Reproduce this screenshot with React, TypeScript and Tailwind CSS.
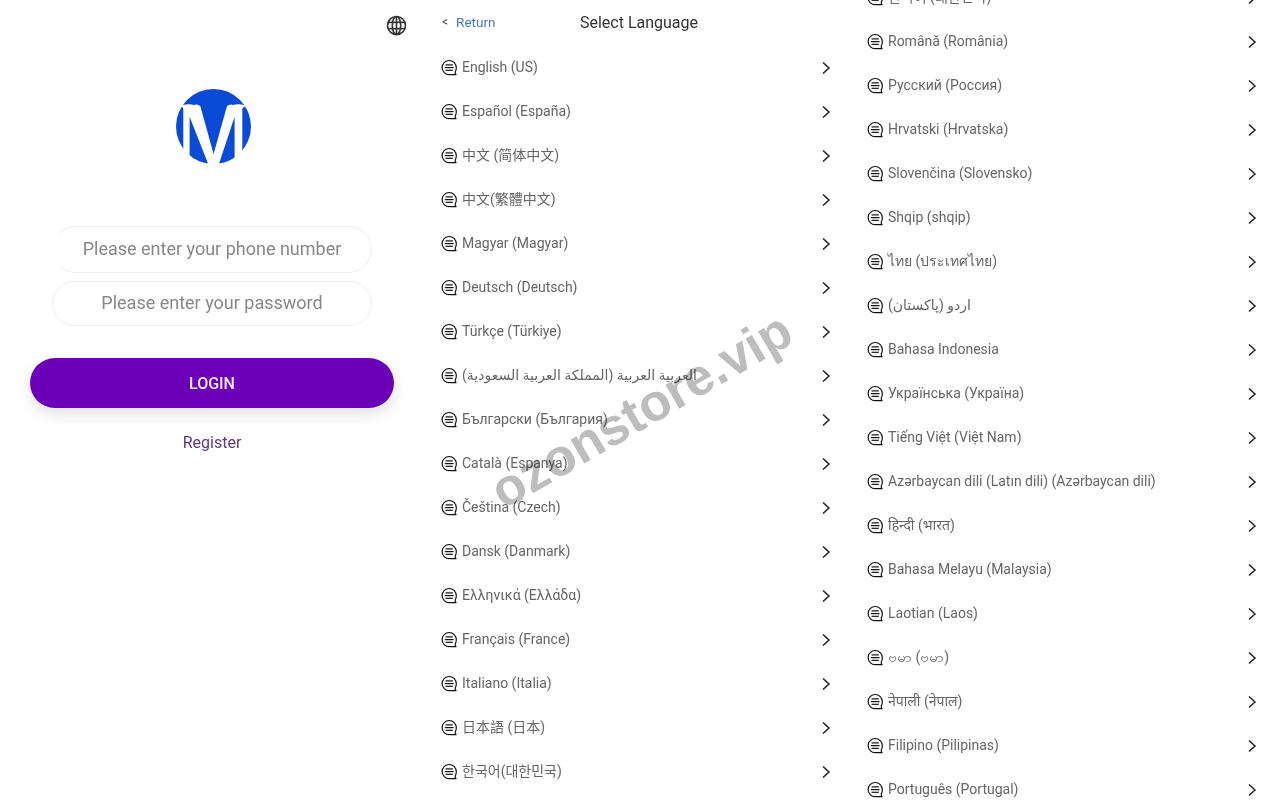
const leftLanguages = [
  "English (US)",
  "Español (España)",
  "中文 (简体中文)",
  "中文(繁體中文)",
  "Magyar (Magyar)",
  "Deutsch (Deutsch)",
  "Türkçe (Türkiye)",
  "العربية العربية (المملكة العربية السعودية)",
  "Български (България)",
  "Català (Espanya)",
  "Čeština (Czech)",
  "Dansk (Danmark)",
  "Ελληνικά (Ελλάδα)",
  "Français (France)",
  "Italiano (Italia)",
  "日本語 (日本)",
  "한국어(대한민국)",
];

const rightLanguages = [
  "한국어 (대한민국)",
  "Română (România)",
  "Русский (Россия)",
  "Hrvatski (Hrvatska)",
  "Slovenčina (Slovensko)",
  "Shqip (shqip)",
  "ไทย (ประเทศไทย)",
  "اردو (پاکستان)",
  "Bahasa Indonesia",
  "Українська (Україна)",
  "Tiếng Việt (Việt Nam)",
  "Azərbaycan dili (Latın dili) (Azərbaycan dili)",
  "हिन्दी (भारत)",
  "Bahasa Melayu (Malaysia)",
  "Laotian (Laos)",
  "ဗမာ (ဗမာ)",
  "नेपाली (नेपाल)",
  "Filipino (Pilipinas)",
  "Português (Portugal)",
];

function BubbleIcon() {
  return (
    <svg viewBox="0 0 17 17" fill="none" stroke="#111" strokeWidth="1.2" className="w-[17px] h-[17px] shrink-0 mt-px">
      <path d="M15 15.7 H8.200 A7.100 7.100 0 1 1 15.300 8.600 C15.300 10.800 14.900 12.300 14.200 13.200 C14.300 14.200 14.600 15.100 15 15.700 Z" strokeLinejoin="round" />
      <line x1="4.600" y1="5.900" x2="11.800" y2="5.900" />
      <line x1="3.800" y1="8.600" x2="12.600" y2="8.600" />
      <line x1="4.600" y1="11.300" x2="11.800" y2="11.300" />
    </svg>
  );
}

function ChevronIcon() {
  return (
    <svg viewBox="0 0 12 14" fill="none" stroke="#222" strokeWidth="1.5" className="w-3 h-3.5 shrink-0 mt-[2px]">
      <path d="M3 1.500 L9 7 L3 12.500" />
    </svg>
  );
}

function LanguageRow({ name }: { name: string }) {
  return (
    <div className="h-11 flex items-center pl-[15px] pr-5">
      <BubbleIcon />
      <span className="ml-1 flex-1 text-sm text-[#666] whitespace-nowrap">{name}</span>
      <ChevronIcon />
    </div>
  );
}

function GlobeIcon() {
  return (
    <svg viewBox="0 0 22 22" fill="none" stroke="#333" strokeWidth="1.7" className="w-[21px] h-[21px]">
      <circle cx="11" cy="11" r="9.4" />
      <ellipse cx="11" cy="11" rx="4.4" ry="9.4" />
      <line x1="11" y1="1.600" x2="11" y2="20.400" />
      <line x1="2.400" y1="7.700" x2="19.600" y2="7.700" />
      <line x1="2.400" y1="14.300" x2="19.600" y2="14.300" />
    </svg>
  );
}

function Logo() {
  return (
    <svg viewBox="0 0 76 76" className="w-[76px] h-[76px]">
      <circle cx="37.500" cy="37.500" r="37.500" fill="#0a4bd6" />
      <path
        d="M7.300 74 L7.300 19.500 Q6 17.500 4 16.500 C9 15.500 14 14.500 18 16 C20 15 22 15.500 24.300 17 L37.600 65 L51 17 C53 15.500 55 15 57 16 C61 14.500 66 15.500 71 16.500 Q68 17.500 66.300 19.500 L66.300 74 L58.600 74 L58.600 27.700 L42.600 76 L32.600 76 L13.600 27.700 L13.600 74 Z"
        fill="#fff"
      />
    </svg>
  );
}

export default function App() {
  return (
    <div className="relative h-[800px] w-[1276px] overflow-hidden bg-white grid grid-cols-[426px_426px_426px] font-['Roboto','Noto_Sans_CJK_SC','DejaVu_Sans','Noto_Sans',sans-serif]">
      <div className="flex flex-col items-center">
        <div className="self-stretch flex justify-end pt-[15px] pr-[19px]">
          <GlobeIcon />
        </div>
        <div className="mt-[53px] ml-[2px]">
          <Logo />
        </div>
        <div className="mt-[61px] w-[320px] flex flex-col gap-2 mr-[2px]">
          <div className="h-[47px] pb-[2px] rounded-full border border-[#eee] border-l-transparent flex items-center justify-center text-lg text-[#888]">
            Please enter your phone number
          </div>
          <div className="h-[45px] pb-[2px] rounded-full border border-[#eee] flex items-center justify-center text-lg text-[#888]">
            Please enter your password
          </div>
        </div>
        <button className="mt-8 h-[50px] w-[364px] mr-[2px] pt-[2px] rounded-full bg-[#6a00b8] text-base font-medium text-[#fde8ff] shadow-[0_6px_14px_rgba(0,0,0,0.12)]">
          LOGIN
        </button>
        <div className="mt-[23px] mr-[2px] text-base text-[#5b3a8c]">Register</div>
      </div>

      <div>
        <div className="relative h-[45px] pt-px flex items-center justify-center text-base text-[#333]">
          <div className="absolute left-4 top-3 flex items-center gap-2 text-[13.500px]">
            <span className="text-[#444] text-xs">&lt;</span>
            <span className="text-[#4a7ab5]">Return</span>
          </div>
          Select Language
        </div>
        {leftLanguages.map((name) => (
          <LanguageRow key={name} name={name} />
        ))}
      </div>

      <div className="-mt-[25px]">
        {rightLanguages.map((name) => (
          <LanguageRow key={name} name={name} />
        ))}
      </div>

      <div className="absolute left-[441px] top-[384px] w-[400px] text-center -rotate-[30deg] text-[52px] leading-none font-bold text-[#bdbdbd] mix-blend-multiply font-['Liberation_Sans',sans-serif] pointer-events-none">
        ozonstore.vip
      </div>
    </div>
  );
}
